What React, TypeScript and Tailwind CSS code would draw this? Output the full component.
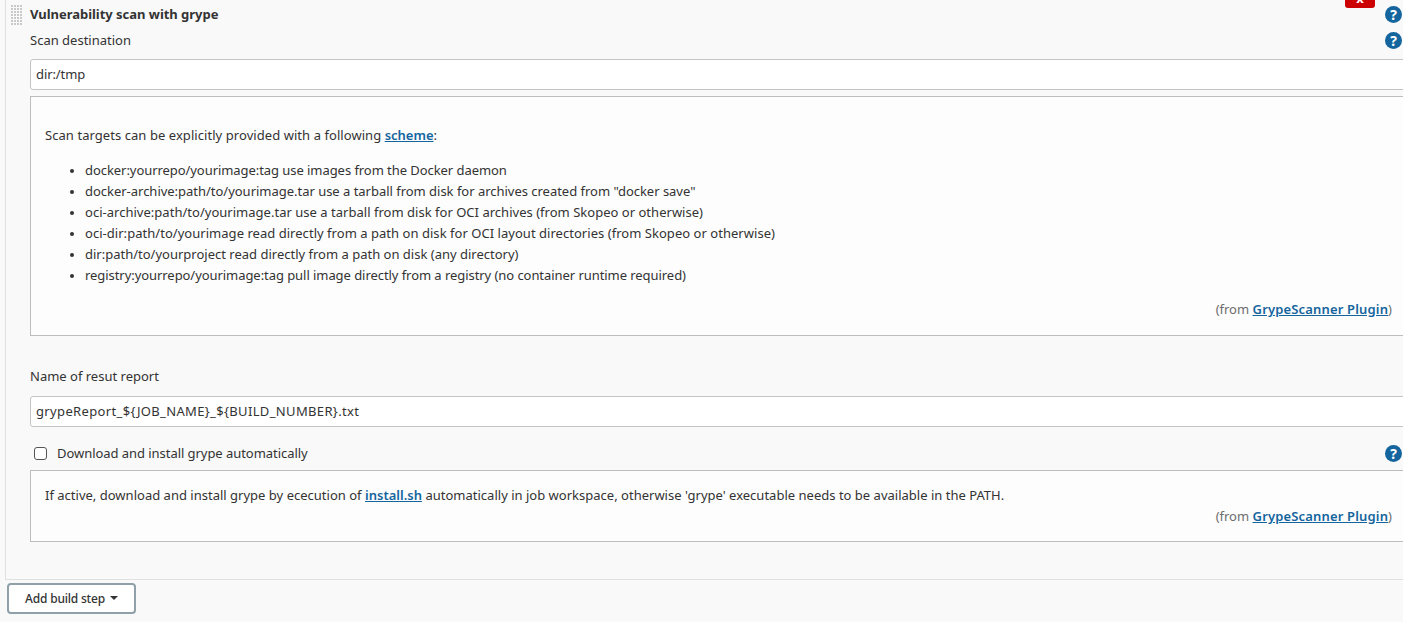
import React from 'react';

const Help = () => (
  <svg width="17" height="17" viewBox="0 0 17 17" className="shrink-0">
    <circle cx="8.5" cy="8.5" r="8.5" fill="#14659e" />
    <text x="8.5" y="13.6" textAnchor="middle" fontSize="14" fontWeight="700" fill="#fff" fontFamily="'Noto Sans', sans-serif">?</text>
  </svg>
);

const Grip = () => (
  <svg width="12" height="21" viewBox="0 0 12 21" className="absolute left-[11px] top-[5px]">
    {[0, 3, 6, 9].map((x) =>
      [0, 3, 6, 9, 12, 15, 18].map((y) => <rect key={`${x}-${y}`} x={x} y={y} width="2" height="2" fill="#c9c9c9" />)
    )}
  </svg>
);

const Source = () => (
  <div className="text-right text-[#6d6d6d] pr-[11px]">
    (from <a className="font-semibold text-[#14659e] underline tracking-[0.16px]">GrypeScanner Plugin</a>)
  </div>
);

const Field = ({ value, className }: { value: string; className?: string }) => (
  <div className={`h-[31px] w-[1400px] border border-[#c4c4c4] rounded-[3px] bg-white flex items-center pl-[5px] text-[#333] ${className ?? ''}`}>
    {value}
  </div>
);

const targets = [
  { text: 'docker:yourrepo/yourimage:tag use images from the Docker daemon', track: 'tracking-[-0.06px]' },
  { text: 'docker-archive:path/to/yourimage.tar use a tarball from disk for archives created from "docker save"', track: 'tracking-[-0.02px]' },
  { text: 'oci-archive:path/to/yourimage.tar use a tarball from disk for OCI archives (from Skopeo or otherwise)', track: 'tracking-[0.02px]' },
  { text: 'oci-dir:path/to/yourimage read directly from a path on disk for OCI layout directories (from Skopeo or otherwise)', track: 'tracking-[0.035px]' },
  { text: 'dir:path/to/yourproject read directly from a path on disk (any directory)', track: '' },
  { text: 'registry:yourrepo/yourimage:tag pull image directly from a registry (no container runtime required)', track: 'tracking-[-0.06px]' },
];

export default function App() {
  return (
    <div className="relative w-[1403px] h-[622px] overflow-hidden bg-[#f9f9f9] text-[13px] leading-[21px] text-[#333] font-['Noto_Sans',sans-serif]">
      <div className="absolute left-[1345px] -top-[22px] w-[30px] h-[30px] bg-[#cc0003] rounded-[3px] text-white text-center font-bold leading-[41px]">x</div>
      <Grip />

      <div className="ml-[5px] h-[580px] border-l border-b border-[#e0e0e0] pl-[24px] flex flex-col">
        <div className="h-[28px] flex items-center justify-between pr-[1px]">
          <span className="font-bold tracking-[-0.03px]">Vulnerability scan with grype</span>
          <Help />
        </div>
        <div className="h-[24px] flex items-center justify-between pr-[1px]">
          <span>Scan destination</span>
          <Help />
        </div>
        <div className="mt-[7px]"><Field value="dir:/tmp" className="tracking-[-0.1px]" /></div>
        <div className="mt-[6px] w-[1400px] h-[240px] border border-[#bdbdbd] bg-[#fdfdfd] pl-[14px] pt-[28px]">
          <p>
            <span className="tracking-[0.06px]">Scan targets can be explicitly provided with a following</span>{' '}
            <a className="font-semibold text-[#14659e] underline">scheme</a>:
          </p>
          <ul className="list-disc pl-[40px] mt-[14px] marker:text-[11px]">
            {targets.map((t) => (
              <li key={t.text} className={t.track}>{t.text}</li>
            ))}
          </ul>
          <div className="mt-[13px] w-[1358px]"><Source /></div>
        </div>
        <div className="mt-[30px]">Name of resut report</div>
        <div className="mt-[9px]"><Field value="grypeReport_${JOB_NAME}_${BUILD_NUMBER}.txt" className="tracking-[0.35px]" /></div>
        <div className="mt-[16px] h-[21px] flex items-center justify-between pr-[1px]">
          <label className="flex items-center">
            <span className="ml-[4px] w-[13px] h-[13px] rounded-[3px] border border-[#555] bg-white" />
            <span className="ml-[10px] tracking-[-0.05px]">Download and install grype automatically</span>
          </label>
          <Help />
        </div>
        <div className="mt-[6px] w-[1400px] h-[72px] border border-[#bdbdbd] bg-[#fdfdfd] pl-[14px] pt-[14px]">
          <p className="tracking-[0.01px]">
            If active, download and install grype by ececution of{' '}
            <a className="font-semibold text-[#14659e] underline">install.sh</a>{' '}
            automatically in job workspace, otherwise 'grype' executable needs to be available in the PATH.
          </p>
          <div className="w-[1358px]"><Source /></div>
        </div>
      </div>

      <button className="ml-[7px] mt-[3px] w-[129px] h-[31px] border-2 border-[#8fa0a8] rounded-[4px] bg-white flex items-center justify-center gap-[5px] text-[12px] font-medium text-[#333] tracking-[-0.2px]">
        Add build step
        <span className="w-0 h-0 border-x-[4.5px] border-x-transparent border-t-[4.5px] border-t-[#333] -mt-[2px]" />
      </button>
    </div>
  );
}
